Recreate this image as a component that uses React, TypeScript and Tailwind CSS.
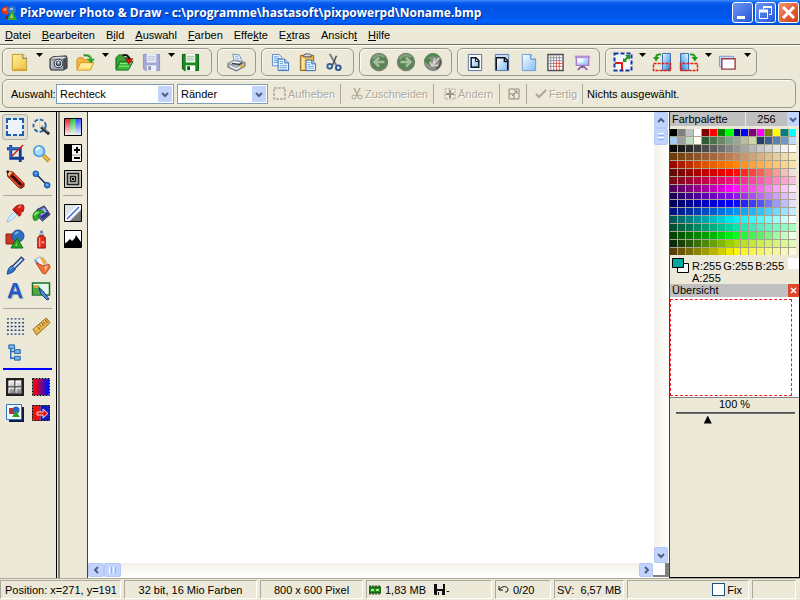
import React, { useState } from "react";

type Kids = { children?: React.ReactNode };

/* ---------- drawing helpers ---------- */

function Pic({ children, size = 19 }: Kids & { size?: number }) {
  return (
    <svg width={size} height={size} viewBox="0 0 20 20" fill="none" aria-hidden="true" className="shrink-0">
      {children}
    </svg>
  );
}

function Logo() {
  return (
    <svg width="16" height="16" viewBox="0 0 16 16" aria-hidden="true" className="shrink-0">
      <defs>
        <linearGradient id="gPaper" x1="0" y1="0" x2="1" y2="1">
          <stop offset="0" stopColor="#ffffff" />
          <stop offset="1" stopColor="#7fbcf5" />
        </linearGradient>
        <linearGradient id="gBlue" x1="0" y1="0" x2="1" y2="1">
          <stop offset="0" stopColor="#f2f8ff" />
          <stop offset="0.6" stopColor="#6fb2ee" />
          <stop offset="1" stopColor="#1f66c8" />
        </linearGradient>
        <linearGradient id="gYellow" x1="0" y1="0" x2="1" y2="1">
          <stop offset="0" stopColor="#fff094" />
          <stop offset="1" stopColor="#ecc048" />
        </linearGradient>
        <linearGradient id="gRedBlue" x1="0" y1="0" x2="1" y2="0">
          <stop offset="0.15" stopColor="#f00010" />
          <stop offset="0.9" stopColor="#0010f0" />
        </linearGradient>
        <linearGradient id="gRainbow" x1="0" y1="0" x2="1" y2="0">
          <stop offset="0" stopColor="#ff1830" />
          <stop offset="0.33" stopColor="#e02040" />
          <stop offset="0.36" stopColor="#18c020" />
          <stop offset="0.62" stopColor="#30d050" />
          <stop offset="0.68" stopColor="#2040ff" />
          <stop offset="1" stopColor="#4060ff" />
        </linearGradient>
        <linearGradient id="gFade" x1="0" y1="0" x2="0" y2="1">
          <stop offset="0" stopColor="#ffffff" stopOpacity="0" />
          <stop offset="1" stopColor="#ffffff" stopOpacity="0.95" />
        </linearGradient>
        <linearGradient id="gMetal" x1="0" y1="0" x2="0" y2="1">
          <stop offset="0" stopColor="#f4f4f4" />
          <stop offset="1" stopColor="#84848c" />
        </linearGradient>
      </defs>
      <path d="M1 3l5-2 3 5-3 4-5-2z" fill="#e03a1c" />
      <path d="M2 4l3-1 1 2-3 1z" fill="#ff9a6a" />
      <circle cx="11" cy="5" r="4" fill="#2e78c8" />
      <path d="M9 3h3v2H9z" fill="#8cc4ff" />
      <path d="M11 5l5 10H6z" fill="#35a82c" />
      <path d="M11 8l1 5H9z" fill="#9be06c" />
      <path d="M5 11h2v3H5z" fill="#7a1c10" />
    </svg>
  );
}

const NewPic = () => (
  <Pic>
    <path d="M2.500 1.500h11l4 4v13h-15z" fill="url(#gYellow)" stroke="#b89a30" />
    <path d="M13.500 1.500v4h4" fill="#fffbe0" stroke="#6e6440" />
    <path d="M4 17.500h13" stroke="#e0a828" strokeWidth="2" />
  </Pic>
);
const CameraPic = () => (
  <Pic>
    <path d="M1 6l3-2 14-1 1 2v11l-4 2H2l-1-2z" fill="#777b84" stroke="#30343c" />
    <path d="M2 7h13v10H3z" fill="#a4a8b0" />
    <path d="M3 5l5-1h8l2 1-3 1H2z" fill="#d8dce0" />
    <path d="M15 6l4-1v10l-4 3z" fill="#484c54" />
    <circle cx="10" cy="11" r="4.500" fill="#e8ecf0" stroke="#282c34" />
    <circle cx="10" cy="11" r="2.500" fill="#5878a0" stroke="#202838" />
    <path d="M9 9h2v2H9z" fill="#fff" />
    <path d="M3 8v8" stroke="#e0e0e0" />
  </Pic>
);
const OpenPic = () => (
  <Pic>
    <path d="M1 17V7l2-2h4l2 2h7v3" fill="#f6b83c" stroke="#d08c20" />
    <path d="M1 18l4-8h14l-4 8z" fill="#ffe278" stroke="#d89830" />
    <path d="M5 12h11M4 14h11" stroke="#fff4b8" />
    <path d="M8 2.500c5-1 8 1 8 5" stroke="#188818" strokeWidth="2.500" />
    <path d="M11.500 6h8.500l-4 5z" fill="#28a428" />
    <path d="M9 2c3-1 6 0 7 4" stroke="#a4e084" />
  </Pic>
);
const ImportPic = () => (
  <Pic>
    <path d="M1 17V5l3-3h4l2 3h6v5" fill="#38a438" stroke="#146414" />
    <path d="M1 18l4-9h14l-5 9z" fill="#3cb83c" stroke="#187018" />
    <path d="M5 11h12M4 14h11" stroke="#90e888" />
    <path d="M8 2.500c4-1 7 0 7 5" stroke="#181010" strokeWidth="2" />
    <path d="M11 6h8l-4.500 6z" fill="#e01414" stroke="#700" strokeWidth="0.500" />
  </Pic>
);
function DiskPic({ body, edge, paper, line }: { body: string; edge: string; paper: string; line: string }) {
  return (
    <Pic>
      <path d="M1.500 1.500h17v17h-15l-2-2z" fill={body} stroke={edge} />
      <path d="M5 1h10v9H5z" fill={paper} />
      <path d="M6 3.500h8M6 5.500h8M6 7.500h8" stroke={line} />
      <path d="M5 13h10v6H5z" fill={paper} />
      <path d="M6.500 14h3v4h-3z" fill={edge} />
    </Pic>
  );
}
const PrinterPic = () => (
  <Pic>
    <path d="M6 1l7 1 3 7-8 2z" fill="#f4fbff" stroke="#7890b8" />
    <path d="M8 3l4 1M8 5l5 1M9 7l5 1" stroke="#8cb0e0" />
    <path d="M1 11l6-3 12 2v4l-9 5-9-4z" fill="#b8bcc4" stroke="#60646c" />
    <path d="M1 11l6-3 12 2-9 4z" fill="#eceef0" stroke="#888c94" />
    <path d="M5 11l8 1 3-2" stroke="#383c44" strokeWidth="1.500" />
    <path d="M3 14l7 3 7-4" stroke="#fff" />
    <path d="M14 15l3-2" stroke="#f0b020" strokeWidth="2" />
  </Pic>
);
const CopyPic = () => (
  <Pic>
    <path d="M1.500 1.500h7l3 3v9h-10z" fill="#e6f2ff" stroke="#5c88c0" />
    <path d="M3 4h5M3 6h7M3 8h7M3 10h6" stroke="#5ca0e8" />
    <path d="M7.500 6.500h7l4 4v8h-11z" fill="#f6fbff" stroke="#3068b0" />
    <path d="M14.500 6.500v4h4" fill="#b0d4f8" stroke="#3068b0" />
    <path d="M9 9h4M9 11h4M9 13h8M9 15h8M9 17h8" stroke="#5ca0e8" />
  </Pic>
);
const PastePic = () => (
  <Pic>
    <path d="M2.500 2.500h14v16h-14z" fill="#e8b44c" stroke="#94641c" />
    <path d="M4 5h3v12H4z" fill="#ffe49c" />
    <path d="M6 4V2l2-1h4l2 1v2z" fill="#d0d4dc" stroke="#505460" />
    <path d="M8.500 7.500h6l4 4v7h-10z" fill="#f6fbff" stroke="#3068b0" />
    <path d="M14.500 7.500v4h4" fill="#b0d4f8" stroke="#3068b0" />
    <path d="M10 10h3M10 12h3M10 14h7M10 16h7" stroke="#5ca0e8" />
  </Pic>
);
const CutPic = () => (
  <Pic>
    <path d="M5 1l7 12" stroke="#a8acb4" strokeWidth="2.500" />
    <path d="M5 1l7 12" stroke="#585c64" />
    <path d="M12 3L8 13" stroke="#484c54" strokeWidth="1.500" />
    <circle cx="5" cy="14" r="2.500" stroke="#34609c" strokeWidth="2" />
    <circle cx="14" cy="15.500" r="2.500" stroke="#2c5490" strokeWidth="2" />
  </Pic>
);
function RoundArrow({ flip = false }: { flip?: boolean }) {
  return (
    <Pic size={20}>
      <circle cx="10" cy="10" r="8.500" fill="#588454" stroke="#7c8074" strokeWidth="1.500" />
      <path d="M4 7a7 7 0 0 1 11-2" stroke="#84a87c" strokeWidth="2" />
      <g transform={flip ? "matrix(-1 0 0 1 20 0)" : undefined}>
        <path d="M15.500 10H6M10 5.500L5.500 10l4.500 4.500" stroke="#a8bca0" strokeWidth="2.500" />
      </g>
    </Pic>
  );
}
const HistoryPic = () => (
  <Pic size={20}>
    <circle cx="10" cy="10" r="8.500" fill="#8c9088" stroke="#74786c" />
    <path d="M3 10a7 7 0 0 1 12-5" stroke="#548c4c" strokeWidth="3" />
    <path d="M1 7h7l-3 6z" fill="#4c8444" />
    <path d="M9 14l7-8M7 10l2 4 6-1M12 6l-2 6" stroke="#d4d8cc" strokeWidth="1.500" />
    <path d="M17 8a8 8 0 0 1-4 9" stroke="#50544c" strokeWidth="1.500" />
  </Pic>
);
const PageSmallPic = () => (
  <Pic>
    <path d="M3.500 1.500h14v17h-14z" fill="#f2f9ff" stroke="#5470a0" />
    <path d="M6.500 5h5l3 3v7h-8z" fill="url(#gPaper)" stroke="#101418" strokeWidth="1.500" />
    <path d="M11 5v4h4" stroke="#101418" />
  </Pic>
);
const PageWidePic = () => (
  <Pic>
    <path d="M3.500 1.500h14v17h-14z" fill="#c4dcf8" stroke="#5874a8" />
    <path d="M4.500 5h9l3 3v10h-12z" fill="url(#gPaper)" />
    <path d="M4.500 18V5h9l3 3v10M13 5v4h4" stroke="#101418" strokeWidth="1.500" />
  </Pic>
);
const PagePic = () => (
  <Pic>
    <path d="M3.500 1.500h9l5 5v12h-14z" fill="url(#gPaper)" stroke="#6c98d0" />
    <path d="M12.500 1.500v5h5" fill="#f4faff" stroke="#3870b8" />
  </Pic>
);
const GridPic = () => (
  <Pic>
    <path d="M2 1.500h16v17H2z" fill="#fff" stroke="#505058" strokeWidth="1.500" />
    <path d="M5 2v16M8 2v16M2 5h16M2 8h16" stroke="#8c9098" />
    <path d="M11 8v10M14 8v10M8 11h10M8 14h10" stroke="#e05450" />
    <path d="M11 2v6M14 2v6M2 11h6M2 14h6" stroke="#8c9098" />
  </Pic>
);
const ScreenPic = () => (
  <Pic>
    <path d="M5 18l5-5 5 5M10 12v4" stroke="#7c4c98" strokeWidth="1.500" />
    <path d="M3.500 4h13v9h-13z" fill="url(#gPaper)" stroke="#a87cc8" strokeWidth="1.500" />
    <path d="M2 4h16" stroke="#b890d8" strokeWidth="2.500" />
    <path d="M5 6h6v4H5z" fill="#fff" opacity="0.700" />
  </Pic>
);
const ResizePic = () => (
  <Pic size={20}>
    <path d="M1.500 1.500h17v17h-17z" fill="#f6f8ff" stroke="#1038a8" strokeWidth="2" strokeDasharray="4 2" />
    <path d="M2 11h7v7" stroke="#e01c14" strokeWidth="2" />
    <path d="M11 9l4-4" stroke="#188c18" strokeWidth="2" />
    <path d="M12 3h5v5zM10 6v4h4z" fill="#189818" />
  </Pic>
);
function RotatePic({ right = false }: { right?: boolean }) {
  return (
    <Pic size={20}>
      <g transform={right ? "matrix(-1 0 0 1 20 0)" : undefined}>
        <path d="M10.500 1.500h8v17h-8z" fill="url(#gBlue)" stroke="#3c70b8" />
        <path d="M1.500 11.500h17v7h-17z" stroke="#e02010" strokeWidth="1.500" strokeDasharray="3 1" />
        <path d="M9 2.500C6 2 4 3 4 6" stroke="#20981c" strokeWidth="2" />
        <path d="M1 5h6.500L4 9.500z" fill="#20981c" />
      </g>
    </Pic>
  );
}
const FramePic = () => (
  <Pic>
    <path d="M1.500 3.500h15v11h-15z" fill="#c4d8f4" stroke="#8098c8" />
    <path d="M4 6h14v11H4z" fill="#fff" stroke="#9c3c48" strokeWidth="1.500" />
  </Pic>
);

const SelectPic = () => (
  <Pic size={20}>
    <path d="M2 2h16v16H2z" fill="#eef4fb" />
    <path
      d="M2 6V2h4M14 2h4v4M18 14v4h-4M6 18H2v-4M2 8v4M18 8v4M8 2h4M8 18h4"
      stroke="#1c60b4"
      strokeWidth="2"
    />
  </Pic>
);
const WandPic = () => (
  <Pic>
    <circle cx="8" cy="8" r="6.500" stroke="#2c68b0" strokeWidth="2" strokeDasharray="4 2" />
    <path d="M8 8l10 9" stroke="#202830" strokeWidth="3" />
    <path d="M9 8l8 7" stroke="#a4acb4" />
    <path d="M6 6h4v4H6z" fill="#fff" />
    <path d="M8 5v5M5 8h5" stroke="#e8d080" />
  </Pic>
);
const CropPic = () => (
  <Pic>
    <path d="M5 1v14h14M1 5h14v14" stroke="#103c94" strokeWidth="3" />
    <path d="M5 2v12M2 5h12" stroke="#3c80d8" />
    <path d="M18 1L6 13" stroke="#c42018" strokeWidth="1.500" />
  </Pic>
);
const LensPic = () => (
  <Pic>
    <path d="M12 12l6 6" stroke="#b07818" strokeWidth="4" />
    <path d="M12 12l6 6" stroke="#f8cc48" strokeWidth="2" />
    <circle cx="7.500" cy="7.500" r="5.500" fill="#a8dcff" stroke="#50a0e0" strokeWidth="2" />
    <path d="M4.500 7c0-2 2-3 4-3" stroke="#fff" strokeWidth="2" />
  </Pic>
);
const PencilPic = () => (
  <Pic>
    <path d="M1 1l6 1 12 12v3l-2 2h-3L2 7z" fill="#b82010" stroke="#601008" />
    <path d="M4 8l11 10M8 4l10 10" stroke="#e84828" strokeWidth="2" />
    <path d="M6 6l10 10" stroke="#200808" strokeWidth="2.500" />
    <path d="M1 1l6 1-4 5z" fill="#f8c074" />
    <path d="M1 1h2v2H1z" fill="#000" />
  </Pic>
);
const LinePic = () => (
  <Pic>
    <path d="M4 4l12 12" stroke="#102850" strokeWidth="1.500" />
    <circle cx="4" cy="4" r="3" fill="#2c80e0" stroke="#185098" />
    <circle cx="16" cy="16" r="3" fill="#2c80e0" stroke="#185098" />
    <path d="M3 3h2v1H3zM15 15h2v1h-2z" fill="#b8e0ff" />
  </Pic>
);
const DropperPic = () => (
  <Pic>
    <path d="M1 19l2-5 7-7 3 3-7 7z" fill="#d0ecff" stroke="#90c4e8" />
    <path d="M11 2l3-1h4l1 3-1 4-3 1 1 2-2 2-7-7 2-2z" fill="#d42018" stroke="#a01810" />
    <path d="M13 4l3-2" stroke="#f89080" strokeWidth="1.500" />
    <path d="M9 6l5 5" stroke="#801008" />
  </Pic>
);
const BucketPic = () => (
  <Pic>
    <path d="M5 6l8-4 6 9-8 7-4-4z" fill="#5c64b8" stroke="#242c58" />
    <path d="M8 7l5-3 3 5-6 4z" fill="#a8b4e8" />
    <path d="M11 16l7-5-2-3-7 5z" fill="#303880" />
    <path d="M2 17c-2-4-1-9 4-10 3-1 6 0 7 2-4 0-6 1-6 4 0 2-1 5-5 4z" fill="#30b028" stroke="#187814" />
    <path d="M3 12c0-2 2-3 4-3" stroke="#a4ec80" strokeWidth="1.500" />
  </Pic>
);
const ShapesPic = () => (
  <Pic size={20}>
    <path d="M1 5h10v10H1z" fill="#c83828" stroke="#902010" />
    <circle cx="13" cy="7" r="6" fill="#3070c0" stroke="#205090" />
    <path d="M10 5l3-2" stroke="#80b8f0" strokeWidth="2" />
    <path d="M12 9l6 10H6z" fill="#28a428" stroke="#0c700c" />
    <path d="M11 15l1-2v4h-2z" fill="#70d868" />
  </Pic>
);
const SprayPic = () => (
  <Pic>
    <circle cx="10" cy="2" r="1.500" fill="#4480c8" />
    <path d="M8 4h4v2H8z" fill="#c0c8d0" stroke="#607088" strokeWidth="0.500" />
    <path d="M6 8l2-2h4l2 2v11H6z" fill="#dc2c20" stroke="#981410" />
    <path d="M8 8v10" stroke="#ff9888" strokeWidth="1.500" />
    <path d="M10 12h3v2h-3z" fill="#f8a898" />
  </Pic>
);
const BrushPic = () => (
  <Pic>
    <path d="M18 2L8 12" stroke="#203c80" strokeWidth="5" />
    <path d="M17 3L8 12" stroke="#d8e8f8" strokeWidth="2" />
    <path d="M6 10l4 4-3 3c-2 1-4 2-6 2 1-2 1-5 2-6z" fill="#2c70cc" stroke="#1c4088" />
    <path d="M4 14l3-2" stroke="#90c0f4" />
  </Pic>
);
const EraserPic = () => (
  <Pic>
    <path d="M3 4l5-3 4 1 6 9-7 3z" fill="#e8f2fc" stroke="#90b0d4" />
    <path d="M3 4l8 9" stroke="#6ca0e0" strokeWidth="2" />
    <path d="M8 1l4 1 4 5-4 2z" fill="#f4b04c" />
    <path d="M4 7l7 3 7-1 1 3-5 7-3-1z" fill="#f07038" stroke="#b84818" />
    <path d="M13 11l4-1-3 6z" fill="#ffb890" />
  </Pic>
);
const LetterPic = () => (
  <span
    aria-hidden="true"
    className="font-['Liberation_Sans',sans-serif] text-[22px] leading-5 font-bold text-[#1c58c8] [text-shadow:1px_1px_1px_#9098a8]"
  >
    A
  </span>
);
const PicturePic = () => (
  <Pic size={20}>
    <path d="M1.500 2h17v12h-17z" fill="#e4f8ec" stroke="#187028" strokeWidth="1.500" />
    <path d="M2 13V5l5-1 4 5v4z" fill="#50a840" />
    <path d="M3 4h4v3H3z" fill="#e8a048" />
    <path d="M8 7l4 3 6 8-2 1-6-6z" fill="#4c90d0" stroke="#143c74" />
  </Pic>
);
const DotsPic = () => (
  <Pic>
    {[2, 6, 10, 14, 18].map((y) => (
      <path key={y} d={`M1 ${y}h18`} stroke="#20407c" strokeWidth="1.500" strokeDasharray="2 2" />
    ))}
  </Pic>
);
const RulerPic = () => (
  <Pic>
    <path d="M1 13L15 1l4 5L5 19z" fill="#e8b448" stroke="#946820" />
    <path d="M3 13L15 3" stroke="#ffe8a0" />
    <path d="M6 10l2 3M8 8l1 2M10 6l2 3M12 5l1 2M14 3l2 3" stroke="#70440c" />
  </Pic>
);
const TreePic = () => (
  <Pic>
    <path d="M5 3v14M5 9h6M5 16h6" stroke="#2c6cb0" strokeWidth="1.500" />
    <path d="M3 2h6v4H3z" fill="#7cb8ec" stroke="#1c5ca8" />
    <path d="M9 7h6v4H9zM9 14h6v4H9z" fill="#7cb8ec" stroke="#1c5ca8" />
  </Pic>
);
const TilesPic = () => (
  <Pic size={20}>
    <path d="M2 2h16v16H2z" fill="#606060" stroke="#202020" strokeWidth="2" />
    <path d="M4 4h5v5H4zM11 4h5v5h-5zM4 11h5v5H4zM11 11h5v5h-5z" fill="url(#gMetal)" />
    <path d="M4 9V4h5M11 9V4h5M4 16v-5h5M11 16v-5h5" stroke="#fff" />
  </Pic>
);
const GradientPic = () => (
  <Pic size={20}>
    <path d="M1.500 1.500h17v17h-17z" fill="url(#gRedBlue)" stroke="#fff" />
    <path d="M1.500 1.500h17v17h-17z" stroke="#000" strokeDasharray="2 1" />
  </Pic>
);
const ObjectPic = () => (
  <Pic size={20}>
    <path d="M4 4h15v15H4z" fill="#0c1c40" />
    <path d="M1.500 1.500h15v15h-15z" fill="#f8fcff" stroke="#2c74c8" />
    <path d="M4 5h6v6H4z" fill="#c83020" />
    <circle cx="11" cy="7" r="3.500" fill="#2c68c0" />
    <path d="M11 8l4 6H7z" fill="#28a028" />
  </Pic>
);
const SwapPic = () => (
  <Pic size={20}>
    <path d="M1.500 2.500h8v15h-8z" fill="#f01010" />
    <path d="M9.500 2.500h9v15h-9z" fill="#0c1cc0" />
    <path d="M1.500 2.500h17v15h-17z" stroke="#000" strokeDasharray="2 1" />
    <path d="M6 9h6V6l5 4.500-5 4.500v-3H6z" fill="#f01814" stroke="#f8d8d0" />
  </Pic>
);
const ColorsPic = () => (
  <Pic size={20}>
    <path d="M1.500 1.500h17v17h-17z" fill="url(#gRainbow)" />
    <path d="M1.500 1.500h17v17h-17z" fill="url(#gFade)" stroke="#000" />
  </Pic>
);
const ContrastPic = () => (
  <Pic size={20}>
    <path d="M1.500 1.500h17v17h-17z" fill="#f4f4f0" stroke="#000" />
    <path d="M1 1h8v18H1z" fill="#000" />
    <path d="M11 7h6M14 4v6M11 15h6" stroke="#000" strokeWidth="2" />
    <path d="M9 12h9" stroke="#a0a0a0" />
  </Pic>
);
const SquaresPic = () => (
  <Pic size={20}>
    <path d="M1.500 1.500h17v17h-17z" fill="#c8c8c0" stroke="#000" />
    <path d="M4.500 4.500h11v11h-11zM7.500 7.500h5v5h-5z" stroke="#202020" strokeWidth="1.500" />
    <path d="M9 9h2v2H9z" fill="#000" />
  </Pic>
);
const DiagonalPic = () => (
  <Pic size={20}>
    <path d="M1.500 1.500h17v17h-17z" fill="#dce4ec" />
    <path d="M18 7v11H7z" fill="#747474" />
    <path d="M2 18L18 2" stroke="#fff" strokeWidth="5" />
    <path d="M4 16L16 4" stroke="#3460d8" strokeWidth="1.500" />
    <path d="M1.500 1.500h17v17h-17z" stroke="#000" />
  </Pic>
);
const HistogramPic = () => (
  <Pic size={20}>
    <path d="M1.500 1.500h17v17h-17z" fill="#fff" stroke="#000" />
    <path d="M1 15l3-2 3-3 2 2 3-3 1-3 2 3 3 4v6H1z" fill="#000" />
  </Pic>
);

/* ---------- controls ---------- */

function Arrow() {
  return (
    <svg width="7" height="4" viewBox="0 0 7 4" aria-hidden="true">
      <path d="M0 0h7L3.500 4z" fill="#000" />
    </svg>
  );
}

function Chevron({ dir = "down" }: { dir?: "up" | "down" | "left" | "right" }) {
  const d = {
    down: "M1 3l3 3 3-3",
    up: "M1 6l3-3 3 3",
    left: "M6 1L3 4l3 3",
    right: "M3 1l3 3-3 3",
  }[dir];
  return (
    <svg width="8" height="8" viewBox="0 0 8 8" fill="none" aria-hidden="true">
      <path d={d} stroke="#4d6185" strokeWidth="2" />
    </svg>
  );
}

function Tool({ label, children }: Kids & { label: string }) {
  return (
    <button type="button" aria-label={label} className="flex h-[26px] w-[27px] items-center justify-center">
      {children}
    </button>
  );
}

function Drop({ label }: { label: string }) {
  return (
    <button type="button" aria-label={label} className="flex h-[26px] w-3 justify-center pt-1">
      <Arrow />
    </button>
  );
}

function Group({ children, pad }: Kids & { pad: string }) {
  return (
    <div className={`flex h-7 items-center rounded-md border border-[#9a9888] shadow-[inset_1px_1px_0_#fbfaf4] ${pad}`}>
      {children}
    </div>
  );
}

function Side({ label, active, children }: Kids & { label: string; active?: boolean }) {
  return (
    <button
      type="button"
      aria-label={label}
      aria-pressed={!!active}
      className={`flex size-[26px] items-center justify-center ${
        active ? "rounded-[3px] border border-[#b4b2a4] bg-[#e2e0d6]" : ""
      }`}
    >
      {children}
    </button>
  );
}

function Combo({ id, value, width }: { id: string; value: string; width: string }) {
  return (
    <div className={`relative h-5 ${width}`}>
      <select
        id={id}
        aria-label={value}
        defaultValue={value}
        className="h-5 w-full appearance-none border border-[#7f9db9] bg-white pl-[3px] text-[11px] leading-[18px] outline-none"
      >
        <option>{value}</option>
      </select>
      <span className="pointer-events-none absolute top-0.5 right-0.5 flex h-4 w-[14px] items-center justify-center rounded-[1px] bg-[#c3d4fc]">
        <Chevron />
      </span>
    </div>
  );
}

function Faded({ children, label, width }: Kids & { label: string; width: string }) {
  return (
    <button
      type="button"
      disabled
      aria-label={label}
      className={`flex h-5 items-center gap-[2px] whitespace-nowrap text-[#aca899] [text-shadow:1px_1px_0_#fff] ${width}`}
    >
      {children}
    </button>
  );
}

const Divider = () => <span className="mr-2 h-5 w-px shrink-0 bg-[#aca899]" />;

/* ---------- data ---------- */

const menu = [
  ["", "D", "atei"],
  ["", "B", "earbeiten"],
  ["B", "i", "ld"],
  ["", "A", "uswahl"],
  ["", "F", "arben"],
  ["Effe", "k", "te"],
  ["E", "x", "tras"],
  ["Ansich", "t", ""],
  ["", "H", "ilfe"],
];

const basic = [
  "#000000", "#808080", "#c0c0c0", "#ffffff", "#800000", "#ff0000", "#008000", "#00ff00",
  "#000080", "#0000ff", "#800080", "#ff00ff", "#808000", "#ffff00", "#008080", "#00ffff",
];
const mixed = [
  "#a6caf0", "#a0a0a4", "#c0dcc0", "#fffbf0", "#2c5a34", "#4c7448", "#6c8868", "#7ca088",
  "#98a498", "#b4c0a0", "#d0d4ac", "#204070", "#3c6090", "#5880b0", "#7098c8", "#b8dcfc",
];
type RGB = [number, number, number];
const ramps: RGB[][] = [
  [[10, 10, 10], [70, 70, 70], [140, 140, 140], [200, 205, 210], [255, 255, 255]],
  [[110, 60, 10], [150, 90, 50], [190, 130, 90], [220, 180, 130], [245, 235, 190]],
  [[150, 10, 0], [220, 80, 0], [255, 128, 0], [255, 175, 80], [250, 225, 170]],
  [[100, 10, 10], [190, 0, 0], [255, 0, 0], [255, 100, 90], [240, 225, 225]],
  [[120, 10, 20], [190, 0, 70], [240, 20, 130], [255, 90, 180], [250, 190, 225]],
  [[80, 0, 90], [160, 0, 150], [255, 0, 255], [245, 110, 240], [255, 230, 255]],
  [[30, 0, 90], [90, 0, 170], [140, 10, 245], [190, 110, 250], [235, 215, 255]],
  [[0, 0, 90], [0, 0, 190], [0, 0, 255], [90, 90, 255], [225, 225, 255]],
  [[0, 20, 130], [0, 70, 190], [0, 140, 245], [50, 200, 255], [190, 235, 255]],
  [[0, 90, 90], [0, 160, 165], [0, 240, 245], [90, 250, 255], [240, 255, 255]],
  [[0, 80, 50], [0, 150, 110], [0, 225, 165], [90, 240, 200], [160, 255, 195]],
  [[0, 70, 0], [0, 150, 0], [0, 250, 20], [100, 240, 110], [235, 255, 230]],
  [[10, 40, 10], [70, 130, 10], [170, 220, 0], [205, 240, 80], [225, 250, 180]],
  [[90, 60, 10], [150, 150, 0], [250, 245, 0], [245, 245, 110], [250, 250, 220]],
];

function rampColor(stops: RGB[], col: number) {
  const p = (col / 15) * (stops.length - 1);
  const i = Math.min(Math.floor(p), stops.length - 2);
  const c = stops[i].map((v, k) => Math.round(v + (stops[i + 1][k] - v) * (p - i)));
  return `rgb(${c[0]}, ${c[1]}, ${c[2]})`;
}

const palette = [...basic, ...mixed, ...ramps.flatMap((r) => basic.map((_, i) => rampColor(r, i)))];

const cell =
  "flex items-center border border-t-[#aca899] border-l-[#aca899] border-r-white border-b-white h-[19px] whitespace-nowrap";
const scrollButton =
  "flex shrink-0 items-center justify-center rounded-[2px] border border-[#b4c8f4] bg-[#c3d4fc]";

/* ---------- page ---------- */

export default function App() {
  const [zoom, setZoom] = useState(25);
  return (
    <div className="flex h-screen w-full flex-col overflow-hidden bg-[#ece9d8] font-['Liberation_Sans',Arial,sans-serif] text-[11px] leading-[14px] text-black">
      <header className="flex h-[25px] shrink-0 items-center gap-[3px] bg-[linear-gradient(#3a8cf8_0px,#0a5cf0_3px,#0054e3_6px,#0058ee_18px,#0064ff_22px,#0046c8_25px)] pl-px">
        <Logo />
        <h1 className="min-w-0 grow font-['Open_Sans','Noto_Sans',sans-serif] text-[12px] leading-[18px] font-bold whitespace-nowrap text-white [text-shadow:1px_1px_0_#0a2c88]">
          PixPower Photo &amp; Draw - c:\programme\hastasoft\pixpowerpd\Noname.bmp
        </h1>
        <div className="flex gap-0.5 pr-px">
          <button type="button" aria-label="Minimieren" className="size-[21px] rounded-[3px] border border-white bg-[linear-gradient(135deg,#6c94f0,#2458d8)]">
            <svg width="19" height="19" viewBox="0 0 19 19" aria-hidden="true"><path d="M4 13h8v3H4z" fill="#fff" /></svg>
          </button>
          <button type="button" aria-label="Wiederherstellen" className="size-[21px] rounded-[3px] border border-white bg-[linear-gradient(135deg,#6c94f0,#2458d8)]">
            <svg width="19" height="19" viewBox="0 0 19 19" fill="none" aria-hidden="true">
              <path d="M7.500 6V3.500h8v8H13" stroke="#fff" />
              <path d="M7 4h9" stroke="#fff" strokeWidth="2" />
              <path d="M3.500 8h8v7.500h-8z" stroke="#fff" />
              <path d="M3 8h9" stroke="#fff" strokeWidth="3" />
            </svg>
          </button>
          <button type="button" aria-label="Schließen" className="size-[21px] rounded-[3px] border border-white bg-[linear-gradient(135deg,#f09070,#d03c10)]">
            <svg width="19" height="19" viewBox="0 0 19 19" aria-hidden="true"><path d="M4 4l11 11M15 4L4 15" stroke="#fff" strokeWidth="3" /></svg>
          </button>
        </div>
      </header>

      <nav className="flex h-5 shrink-0 items-center gap-[11px] border-b border-[#716f64] pl-[5px]">
        {menu.map(([a, u, b]) => (
          <button type="button" key={a + u + b}>
            {a}
            <span className="underline">{u}</span>
            {b}
          </button>
        ))}
      </nav>

      <div className="flex shrink-0 items-center gap-[5px] border-t border-white pt-0.5 pb-[3px] pl-0.5">
        <Group pad="pl-[3px] pr-[7px]">
          <Tool label="Neu"><NewPic /></Tool>
          <Drop label="Neu Optionen" />
          <Tool label="Kamera"><CameraPic /></Tool>
          <Tool label="Öffnen"><OpenPic /></Tool>
          <Drop label="Öffnen Optionen" />
          <Tool label="Importieren"><ImportPic /></Tool>
          <Tool label="Speichern"><DiskPic body="#a4a8d4" edge="#9094bc" paper="#eef0f8" line="#b8bcd8" /></Tool>
          <Drop label="Speichern Optionen" />
          <Tool label="Speichern unter"><DiskPic body="#188c1c" edge="#0c5410" paper="#f8fff8" line="#98b898" /></Tool>
        </Group>
        <Group pad="px-[5px]">
          <Tool label="Drucken"><PrinterPic /></Tool>
        </Group>
        <Group pad="px-[5px]">
          <Tool label="Kopieren"><CopyPic /></Tool>
          <Tool label="Einfügen"><PastePic /></Tool>
          <Tool label="Ausschneiden"><CutPic /></Tool>
        </Group>
        <Group pad="px-[5px]">
          <Tool label="Rückgängig"><RoundArrow /></Tool>
          <Tool label="Wiederholen"><RoundArrow flip /></Tool>
          <Tool label="Verlauf"><HistoryPic /></Tool>
        </Group>
        <Group pad="px-[3px]">
          <Tool label="Originalgröße"><PageSmallPic /></Tool>
          <Tool label="Breite anpassen"><PageWidePic /></Tool>
          <Tool label="Ganze Seite"><PagePic /></Tool>
          <Tool label="Raster"><GridPic /></Tool>
          <Tool label="Präsentation"><ScreenPic /></Tool>
        </Group>
        <Group pad="px-[3px]">
          <Tool label="Bildgröße"><ResizePic /></Tool>
          <Drop label="Bildgröße Optionen" />
          <Tool label="Links drehen"><RotatePic /></Tool>
          <Tool label="Rechts drehen"><RotatePic right /></Tool>
          <Drop label="Drehen Optionen" />
          <Tool label="Rahmen"><FramePic /></Tool>
          <Drop label="Rahmen Optionen" />
        </Group>
      </div>

      <div className="mr-1 mb-[3px] ml-0.5 flex h-[29px] shrink-0 items-center rounded-md border border-[#9a9888] pl-2 shadow-[inset_1px_1px_0_#fbfaf4]">
        <label htmlFor="selection" className="w-[45px]">Auswahl:</label>
        <Combo id="selection" value="Rechteck" width="w-[118px] mr-[3px]" />
        <Combo id="edges" value="Ränder" width="w-[91px] mr-[5px]" />
        <Faded label="Aufheben" width="w-[67px]">
          <svg width="13" height="13" viewBox="0 0 13 13" fill="none" aria-hidden="true">
            <path d="M1 1h11v11H1z" stroke="#aca899" strokeWidth="1.500" strokeDasharray="3 1" />
          </svg>
          Aufheben
        </Faded>
        <Divider />
        <Faded label="Zuschneiden" width="w-[84px] pl-0.5">
          <svg width="12" height="13" viewBox="0 0 12 13" fill="none" aria-hidden="true">
            <path d="M3 1l4 8M9 1L5 9" stroke="#aca899" strokeWidth="1.500" />
            <circle cx="3" cy="10" r="2" stroke="#aca899" />
            <circle cx="9" cy="10" r="2" stroke="#aca899" />
          </svg>
          Zuschneiden
        </Faded>
        <Divider />
        <Faded label="Ändern" width="w-[57px] pl-0.5">
          <svg width="12" height="12" viewBox="0 0 12 12" fill="none" aria-hidden="true">
            <path d="M1 1h10v10H1z" stroke="#aca899" strokeDasharray="2 1" />
            <path d="M6 2v8M2 6h8" stroke="#98948a" strokeWidth="2" />
          </svg>
          Ändern
        </Faded>
        <Divider />
        <Faded label="Skalieren" width="w-[18px]">
          <svg width="12" height="12" viewBox="0 0 12 12" fill="none" aria-hidden="true">
            <path d="M1 1h10v10H1z" stroke="#8c8878" />
            <path d="M1 6h5v5M4 8l5-5M6 3h3v3" stroke="#8c8878" />
          </svg>
        </Faded>
        <Divider />
        <Faded label="Fertig" width="w-[47px]">
          <svg width="12" height="10" viewBox="0 0 12 10" fill="none" aria-hidden="true">
            <path d="M1 5l3 3 7-7" stroke="#aca899" strokeWidth="2" />
          </svg>
          Fertig
        </Faded>
        <span className="mr-1 h-5 w-px shrink-0 bg-[#aca899]" />
        <span className="whitespace-nowrap">Nichts ausgewählt.</span>
      </div>

      <main className="flex min-h-0 grow border-t border-black">
        <aside className="flex w-[57px] shrink-0 flex-col border-r border-black pt-0.5 pl-0.5">
          <div className="grid grid-cols-[26px_26px]">
            <Side label="Auswahl" active><SelectPic /></Side>
            <Side label="Zauberstab"><WandPic /></Side>
            <Side label="Beschneiden"><CropPic /></Side>
            <Side label="Zoom"><LensPic /></Side>
            <Side label="Stift"><PencilPic /></Side>
            <Side label="Linie"><LinePic /></Side>
          </div>
          <hr className="mt-[3px] mr-1 mb-1 ml-px border-[#aca899]" />
          <div className="grid grid-cols-[26px_26px]">
            <Side label="Pipette"><DropperPic /></Side>
            <Side label="Füllen"><BucketPic /></Side>
            <Side label="Formen"><ShapesPic /></Side>
            <Side label="Sprühdose"><SprayPic /></Side>
            <Side label="Pinsel"><BrushPic /></Side>
            <Side label="Radierer"><EraserPic /></Side>
            <Side label="Text"><LetterPic /></Side>
            <Side label="Bildpinsel"><PicturePic /></Side>
          </div>
          <hr className="mt-1 mr-1 mb-1 ml-px border-[#aca899]" />
          <div className="grid grid-cols-[26px_26px]">
            <Side label="Punktraster"><DotsPic /></Side>
            <Side label="Lineal"><RulerPic /></Side>
            <Side label="Struktur"><TreePic /></Side>
          </div>
          <hr className="mt-[3px] mr-1 mb-1 ml-px border-t-2 border-[#0000ff]" />
          <div className="grid grid-cols-[26px_26px]">
            <Side label="Kacheln"><TilesPic /></Side>
            <Side label="Verlauf"><GradientPic /></Side>
            <Side label="Objekt"><ObjectPic /></Side>
            <Side label="Tauschen"><SwapPic /></Side>
          </div>
        </aside>

        <aside className="ml-px flex w-[30px] shrink-0 flex-col items-center border-r border-l-2 border-r-[#404040] border-l-[#84827a] pt-0.5 pr-0.5">
          <Side label="Farben"><ColorsPic /></Side>
          <Side label="Kontrast"><ContrastPic /></Side>
          <Side label="Schärfe"><SquaresPic /></Side>
          <hr className="mt-[3px] mb-1 w-5 border-[#aca899]" />
          <Side label="Diagonale"><DiagonalPic /></Side>
          <Side label="Histogramm"><HistogramPic /></Side>
        </aside>

        <section className="flex min-w-0 grow flex-col bg-white">
          <div className="flex min-h-0 grow">
            <div className="min-w-0 grow bg-white" />
            <div className="mr-px flex w-[14px] shrink-0 flex-col bg-[linear-gradient(90deg,#f4f1ea,#fefefb)]">
              <button type="button" aria-label="Nach oben" className={`h-4 ${scrollButton}`}><Chevron dir="up" /></button>
              <div className="flex h-[17px] flex-col items-center justify-center gap-px rounded-[2px] border border-[#b4c8f4] bg-[#c3d4fc]">
                <span className="h-px w-1.5 bg-white" />
                <span className="h-px w-1.5 bg-[#8cb0f8]" />
                <span className="h-px w-1.5 bg-white" />
                <span className="h-px w-1.5 bg-[#8cb0f8]" />
              </div>
              <span className="grow" />
              <button type="button" aria-label="Nach unten" className={`h-4 ${scrollButton}`}><Chevron /></button>
            </div>
          </div>
          <div className="flex h-[15px] shrink-0 pb-px">
            <div className="flex grow bg-[linear-gradient(#f4f1ea,#fefefb)]">
              <button type="button" aria-label="Nach links" className={`w-4 ${scrollButton}`}><Chevron dir="left" /></button>
              <div className="flex w-[17px] items-center justify-center gap-px rounded-[2px] border border-[#b4c8f4] bg-[#c3d4fc]">
                <span className="h-1.5 w-px bg-white" />
                <span className="h-1.5 w-px bg-[#8cb0f8]" />
                <span className="h-1.5 w-px bg-white" />
                <span className="h-1.5 w-px bg-[#8cb0f8]" />
              </div>
              <span className="grow" />
              <button type="button" aria-label="Nach rechts" className={`w-[14px] ${scrollButton}`}><Chevron dir="right" /></button>
            </div>
            <div className="w-4 shrink-0 border-r-4 border-b-2 border-[#808080] bg-white" />
          </div>
        </section>

        <aside className="flex w-[131px] shrink-0 flex-col border-r border-b border-l border-r-black border-b-black border-l-[#404040]">
          <div className="flex h-[14px] bg-[#c0c0c0]">
            <h2 className="w-[76px] border-r border-[#ece9d8] pl-[2px]">Farbpalette</h2>
            <span className="grow text-center">256</span>
            <button type="button" aria-label="Palette wählen" className="flex w-3 items-center justify-center bg-[#c3d4fc]"><Chevron /></button>
          </div>
          <div className="mt-[3px] grid h-[126px] w-[126px] grid-cols-16 grid-rows-16 gap-px bg-[#a8a490]">
            {palette.map((c, i) => (
              <span key={i} style={{ backgroundColor: c }} />
            ))}
          </div>
          <div className="flex h-[29px] pt-[3px] pl-[2px]">
            <svg width="18" height="17" viewBox="0 0 18 17" aria-hidden="true">
              <path d="M5.500 5.500h11v9h-11z" fill="#fff" stroke="#000" />
              <path d="M.5.5h11v9H.5z" fill="#00a8a0" stroke="#000" />
            </svg>
            <p className="grow pt-[2px] pl-[2px] leading-3">
              <span className="flex gap-[2px] whitespace-nowrap"><span>R:255</span><span>G:255</span><span>B:255</span></span>
              A:255
            </p>
            <span className="size-[11px] bg-white" />
          </div>
          <div className="flex h-[13px] bg-[#c0c0c0]">
            <h2 className="grow pl-[2px] leading-[13px]">Übersicht</h2>
            <button type="button" aria-label="Übersicht schließen" className="flex w-[11px] items-center justify-center bg-[#e0482c]">
              <svg width="7" height="7" viewBox="0 0 7 7" aria-hidden="true"><path d="M1 1l5 5M6 1L1 6" stroke="#fff" strokeWidth="1.500" /></svg>
            </button>
          </div>
          <div className="h-[101px] border-b border-[#808080] bg-white pt-[2px]">
            <div className="h-[97px] w-[122px] border border-dashed border-[#f02020]" />
          </div>
          <label htmlFor="zoom" className="h-3 text-center leading-3">100 %</label>
          <input
            id="zoom"
            type="range"
            value={zoom}
            onChange={(e) => setZoom(Number(e.target.value))}
            className="mr-1 ml-1.5 h-[14px] appearance-none bg-[linear-gradient(#404040,#808080)] bg-[length:100%_2px] bg-[position:0_2px] bg-no-repeat [&::-webkit-slider-thumb]:mt-[5px] [&::-webkit-slider-thumb]:h-2 [&::-webkit-slider-thumb]:w-2 [&::-webkit-slider-thumb]:appearance-none [&::-webkit-slider-thumb]:bg-black [&::-webkit-slider-thumb]:[clip-path:polygon(50%_0,100%_100%,0_100%)]"
          />
        </aside>
      </main>

      <footer className="flex h-[22px] shrink-0 items-center gap-[3px] border-t border-[#aca899] pr-1">
        <div className={`w-[121px] pl-1 ${cell}`}>Position: x=271, y=191</div>
        <div className={`w-[133px] justify-center ${cell}`}>32 bit, 16 Mio Farben</div>
        <div className={`w-[103px] justify-center ${cell}`}>800 x 600 Pixel</div>
        <div className={`w-[126px] pl-[2px] ${cell}`}>
          <svg width="12" height="10" viewBox="0 0 12 10" aria-hidden="true" className="mr-1">
            <path d="M1 0v10M4 0v10M7 0v10M10 0v10" stroke="#204010" />
            <path d="M0 2h12v6H0z" fill="#208c18" stroke="#0c3c08" />
            <path d="M2 4h3v2H2zM7 4h3v2H7z" fill="#a8e888" />
          </svg>
          1,83 MB
          <svg width="11" height="11" viewBox="0 0 11 11" aria-hidden="true" className="mr-px ml-2">
            <path d="M0 0h11v11H1l-1-1z" fill="#101010" />
            <path d="M3 0h6v5H3zM3 7h5v4H3z" fill="#e8e8e0" />
            <path d="M4 8h1v3H4z" fill="#101010" />
          </svg>
          -
        </div>
        <div className={`w-[56px] pl-[2px] ${cell}`}>
          <svg width="11" height="9" viewBox="0 0 11 9" fill="none" aria-hidden="true" className="mr-1">
            <path d="M1 1v4h4M1 5c2-4 9-5 9 0 0 2-2 2-3 2" stroke="#101010" />
          </svg>
          0/20
        </div>
        <div className={`w-[70px] pl-[2px] ${cell}`}>SV:&nbsp; 6,57 MB</div>
        <div className={`min-w-0 grow justify-end pr-1.5 ${cell}`}>
          <input id="fix" type="checkbox" className="mr-[2px] size-[13px] appearance-none border border-[#1c5180] bg-white checked:bg-[#21a121]" />
          <label htmlFor="fix">Fix</label>
        </div>
        <div className={`w-11 ${cell}`} />
      </footer>
    </div>
  );
}
